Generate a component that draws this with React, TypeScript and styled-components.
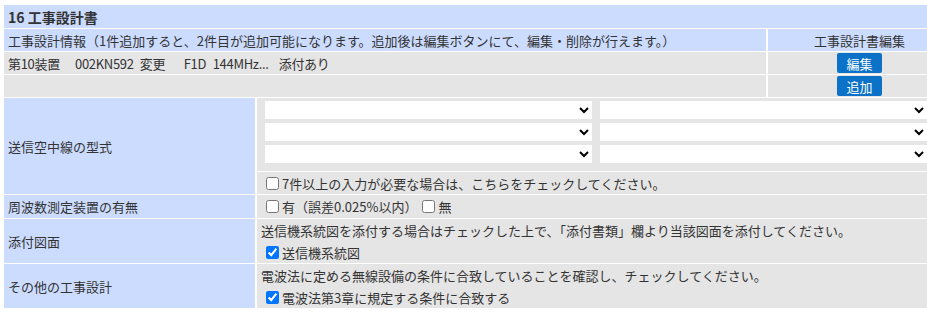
import React, { FC } from 'react';
import styled, { createGlobalStyle, css } from 'styled-components';

const GlobalStyle = createGlobalStyle`
    html, body {
        margin: 0;
        padding: 0;
        background: #ffffff;
        overflow: hidden;
    }
    body {
        font-family: "Noto Sans CJK JP", "Noto Sans", sans-serif;
        font-size: 13px;
        color: #333333;
    }
`;

const Page = styled.div`
    padding: 5px 0 0 4px;
    width: 960px;
`;

const Table = styled.div`
    display: grid;
    grid-template-columns: 251px 509px 183px;
    column-gap: 2px;
    row-gap: 1px;
`;

const Cell = styled.div<{ $tone: 'blue' | 'gray'; $span?: string; $h: number; $center?: boolean }>`
    grid-column: ${({ $span }) => $span || 'auto'};
    height: ${({ $h }) => $h}px;
    background: ${({ $tone }) => ($tone === 'blue' ? '#ccdcff' : '#e5e5e5')};
    padding: 0 4px;
    display: flex;
    align-items: center;
    white-space: nowrap;
    ${({ $center }) =>
        $center &&
        css`
            justify-content: center;
        `}
`;

const StackCell = styled(Cell)`
    flex-direction: column;
    align-items: stretch;
    justify-content: center;
`;

const Title = styled.span`
    font-weight: bold;
    font-size: 14px;
`;

// 装置一覧の各項目（参考画像の位置に合わせて最小幅を指定）
const Seg = styled.span<{ $w?: number }>`
    display: inline-block;
    min-width: ${({ $w }) => ($w ? `${$w}px` : '0')};
    padding-right: 6px;
    box-sizing: border-box;
    letter-spacing: -0.3px;
`;

const BlueButton = styled.button`
    width: 45px;
    height: 20px;
    padding: 0;
    border: none;
    border-radius: 2px;
    background: #0b72c8;
    color: #ffffff;
    font-family: inherit;
    font-size: 13px;
    cursor: pointer;
`;

const ModelCell = styled.div`
    grid-column: 2 / 4;
    height: 96px;
    background: #e5e5e5;
    display: flex;
    flex-direction: column;
`;

const SelectGrid = styled.div`
    display: grid;
    grid-template-columns: 327px 327px;
    column-gap: 8px;
    row-gap: 4px;
    padding: 3px 8px 8px 8px;
`;

const Select = styled.select`
    height: 18px;
    border: none;
    border-radius: 0;
    background: #ffffff;
    font-family: inherit;
    font-size: 13px;
    padding: 0 2px;
`;

const CheckRow = styled.div`
    height: 22px;
    border-top: 1px solid #ffffff;
    display: flex;
    align-items: center;
    padding-left: 4px;
`;

const Line = styled.div`
    height: 22px;
    display: flex;
    align-items: center;
`;

const Check = styled.input.attrs({ type: 'checkbox' })`
    width: 13px;
    height: 13px;
    margin: 0 3px 0 5px;
`;

const App: FC = () => {
    return (
        <>
            <GlobalStyle />
            <Page>
                <Table>
                    <Cell $tone="blue" $span="1 / 4" $h={23}>
                        <Title>16 工事設計書</Title>
                    </Cell>

                    <Cell $tone="blue" $span="1 / 3" $h={22}>
                        工事設計情報（1件追加すると、2件目が追加可能になります。追加後は編集ボタンにて、編集・削除が行えます。）
                    </Cell>
                    <Cell $tone="blue" $h={22} $center>
                        工事設計書編集
                    </Cell>

                    <Cell $tone="gray" $span="1 / 3" $h={22}>
                        <Seg $w={67}>第10装置</Seg>
                        <Seg $w={53}>002KN592</Seg>
                        <Seg $w={44}>変更</Seg>
                        <Seg $w={29}>F1D</Seg>
                        <Seg $w={66}>144MHz...</Seg>
                        <Seg>添付あり</Seg>
                    </Cell>
                    <Cell $tone="gray" $h={22} $center>
                        <BlueButton>編集</BlueButton>
                    </Cell>

                    <Cell $tone="gray" $span="1 / 3" $h={22} />
                    <Cell $tone="gray" $h={22} $center>
                        <BlueButton>追加</BlueButton>
                    </Cell>

                    <Cell $tone="blue" $h={96}>
                        送信空中線の型式
                    </Cell>
                    <ModelCell>
                        <SelectGrid>
                            {[0, 1, 2, 3, 4, 5].map((i) => (
                                <Select key={i} defaultValue="">
                                    <option value=""></option>
                                </Select>
                            ))}
                        </SelectGrid>
                        <CheckRow>
                            <Check />
                            7件以上の入力が必要な場合は、こちらをチェックしてください。
                        </CheckRow>
                    </ModelCell>

                    <Cell $tone="blue" $h={23}>
                        周波数測定装置の有無
                    </Cell>
                    <Cell $tone="gray" $span="2 / 4" $h={23}>
                        <Check />
                        有（誤差0.025%以内）
                        <Check />
                        無
                    </Cell>

                    <Cell $tone="blue" $h={44}>
                        添付図面
                    </Cell>
                    <StackCell $tone="gray" $span="2 / 4" $h={44}>
                        <Line>送信機系統図を添付する場合はチェックした上で、「添付書類」欄より当該図面を添付してください。</Line>
                        <Line>
                            <Check defaultChecked />
                            送信機系統図
                        </Line>
                    </StackCell>

                    <Cell $tone="blue" $h={44}>
                        その他の工事設計
                    </Cell>
                    <StackCell $tone="gray" $span="2 / 4" $h={44}>
                        <Line>電波法に定める無線設備の条件に合致していることを確認し、チェックしてください。</Line>
                        <Line>
                            <Check defaultChecked />
                            電波法第3章に規定する条件に合致する
                        </Line>
                    </StackCell>
                </Table>
            </Page>
        </>
    );
};

export default App;
